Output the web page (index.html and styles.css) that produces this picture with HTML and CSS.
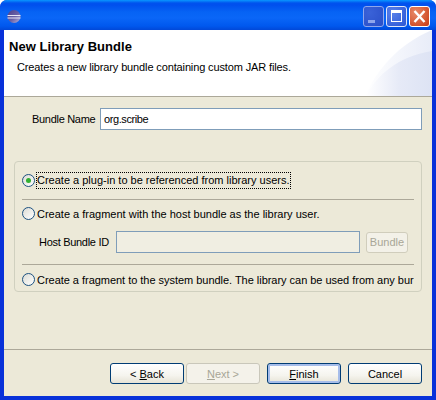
FILE: index.html
```html
<!DOCTYPE html>
<html lang="en">
<head>
<meta charset="utf-8">
<title>New Library Bundle</title>
<link rel="stylesheet" href="styles.css">
</head>
<body>
<div class="window">
  <div class="titlebar">
    <svg class="app-icon" width="14" height="14" viewBox="0 0 14 14">
      <defs><linearGradient id="eg" x1="0" y1="0" x2="1" y2="1"><stop offset="0" stop-color="#4a3f8c"/><stop offset=".55" stop-color="#6a62a8"/><stop offset="1" stop-color="#b8b4dc"/></linearGradient></defs>
      <circle cx="7" cy="6.5" r="6.5" fill="url(#eg)"/>
      <rect x="0.5" y="5" width="13" height="1" fill="#e8e8f6"/>
      <rect x="0.5" y="7.5" width="13" height="1" fill="#e8e8f6"/>
    </svg>
    <div class="controls">
      <span class="ctl ctl-min"><svg width="21" height="21" viewBox="0 0 21 21"><rect x="5" y="14" width="7" height="3" fill="#8ea6ec"/></svg></span>
      <span class="ctl ctl-max"><svg width="21" height="21" viewBox="0 0 21 21"><path d="M5 4h11v12H5z M6 7v8h9V7z" fill="#fff" fill-rule="evenodd"/></svg></span>
      <span class="ctl ctl-close"><svg width="21" height="21" viewBox="0 0 21 21"><path d="M5.5 5l10 11M15.5 5l-10 11" stroke="#fff" stroke-width="2.4"/></svg></span>
    </div>
  </div>
  <div class="client">
    <header class="banner">
      <h1 class="banner-title">New Library Bundle</h1>
      <p class="banner-desc">Creates a new library bundle containing custom JAR files.</p>
      <svg class="banner-art" width="70" height="66" viewBox="0 0 70 66">
        <defs><linearGradient id="ba" x1="0" y1="0" x2="1" y2="0"><stop offset="0" stop-color="#fff"/><stop offset="1" stop-color="#e8ecf8"/></linearGradient>
        <linearGradient id="bb" x1="0" y1="0" x2="1" y2="0"><stop offset="0" stop-color="#fff"/><stop offset=".5" stop-color="#e6eaf7"/><stop offset="1" stop-color="#dde3f4"/></linearGradient></defs>
        <path d="M3 66C15 40 35 15 70 0V66z" fill="url(#ba)"/>
        <path d="M4 66C15 45 35 27 70 21V66z" fill="url(#bb)"/>
      </svg>
    </header>
    <main class="body">
      <div class="name-row">
        <label class="name-label">Bundle Name</label>
        <input class="field" type="text" value="org.scribe">
      </div>
      <div class="group">
        <div class="opt opt-first"><span class="radio radio-on"></span><span class="focus">Create a plug-in to be referenced from library users.</span></div>
        <div class="sep"></div>
        <div class="opt opt-second"><span class="radio"></span><span class="opt-text">Create a fragment with the host bundle as the library user.</span></div>
        <div class="host-row">
          <span class="host-label">Host Bundle ID</span>
          <span class="host-field"></span>
          <span class="host-btn">Bundle</span>
        </div>
        <div class="sep"></div>
        <div class="opt opt-third"><span class="radio"></span><span class="opt-text clip">Create a fragment to the system bundle. The library can be used from any bur</span></div>
      </div>
    </main>
    <footer class="footer">
      <button class="btn back">&lt; <u>B</u>ack</button>
      <button class="btn next" disabled><u>N</u>ext &gt;</button>
      <button class="btn finish default"><u>F</u>inish</button>
      <button class="btn cancel">Cancel</button>
    </footer>
  </div>
</div>
</body>
</html>
```
FILE: styles.css
```css
* { box-sizing: border-box; }
html, body { margin: 0; padding: 0; }
body { width: 436px; height: 400px; overflow: hidden; font-family: "Liberation Sans", "Noto Sans", sans-serif; font-size: 11px; color: #000; }
.window { width: 436px; height: 400px; display: flex; flex-direction: column; background: #0831d9; border-radius: 7px 7px 0 0; overflow: hidden; }
.titlebar { height: 30px; flex: none; display: flex; align-items: flex-start; padding: 6px 6px 0 7px; background: linear-gradient(180deg, #0997ff 0, #0053ee 3px, #0050ee 5px, #0663f4 12px, #0a66f7 18px, #0058ee 26px, #0148d8 30px); }
.app-icon { margin-top: 4px; }
.controls { margin-left: auto; display: flex; gap: 2px; }
.ctl { width: 21px; height: 21px; border: 1px solid #fff; border-radius: 3px; display: block; overflow: hidden; }
.ctl svg { display: block; margin: -1px; }
.ctl-min { background: radial-gradient(circle at 30% 30%, #3a62d8, #2a4fc8); border-color: #8ea6ec; }
.ctl-max { background: radial-gradient(circle at 30% 30%, #5a82ea, #2a55d4); border-color: #dfe6f8; }
.ctl-close { background: radial-gradient(circle at 30% 30%, #e88a68, #c93a14); }
.client { flex: 1; margin: 0 4px 4px; background: #ece9d8; display: flex; flex-direction: column; min-height: 0; }
.banner { height: 67px; flex: none; background: #fff; border-bottom: 1px solid #aca899; padding: 9px 0 0 5px; position: relative; }
.banner-title { margin: 0; font-size: 13px; line-height: 15px; font-weight: 700; letter-spacing: 0.05px; }
.banner-desc { margin: 6px 0 0 8px; line-height: 15px; letter-spacing: -0.13px; }
.banner-art { position: absolute; right: 0; top: 0; }
.body { flex: 1; padding: 11px 10px 0; min-height: 0; }
.name-row { display: flex; align-items: center; height: 22px; }
.name-label { margin-left: 18px; width: 68px; flex: none; white-space: nowrap; letter-spacing: -0.3px; }
.field { width: 322px; height: 22px; border: 1px solid #7f9db9; padding: 0 3px; font: inherit; color: #000; background: #fff; letter-spacing: -0.4px; }
.group { margin-top: 31px; height: 131px; width: 408px; border: 1px solid #d0d0bf; border-radius: 4px; padding: 0 7px; overflow: hidden; }
.opt { display: flex; align-items: center; height: 15px; white-space: nowrap; }
.opt-first { margin-top: 11px; }
.opt-second { margin-top: 6px; }
.opt-third { margin-top: 7px; }
.radio { width: 13px; height: 13px; border-radius: 50%; border: 1px solid #1c5180; background: linear-gradient(135deg, #dcdcd4, #fff); flex: none; margin-right: 2px; position: relative; }
.radio-on::after { content: ""; position: absolute; left: 3px; top: 3px; width: 5px; height: 5px; border-radius: 50%; background: #31b031; }
.focus { outline: 1px dotted #000; line-height: 15px; }
.opt-text { overflow: hidden; }
.clip { width: 377px; letter-spacing: -0.03px; }
.sep { height: 1px; background: #aca899; margin-top: 11px; }
.host-row { display: flex; align-items: center; height: 22px; margin-top: 10px; }
.host-label { margin-left: 17px; width: 77px; flex: none; white-space: nowrap; letter-spacing: -0.3px; }
.host-field { width: 244px; height: 22px; border: 1px solid #7f9db9; background: #f0eee2; }
.host-btn { width: 42px; height: 21px; margin-left: 6px; border: 1px solid #d0cdbc; border-radius: 3px; background: #f3f1e8; color: #a8a697; display: flex; align-items: center; justify-content: center; }
.footer { height: 47px; flex: none; border-top: 1px solid #aca899; margin-top: auto; display: flex; padding: 13px 0 0 106px; gap: 2px; }
.btn { width: 74px; height: 21px; padding: 0; font: inherit; color: #000; border: 1px solid #003c74; border-radius: 3px; background: linear-gradient(180deg, #fff 0, #f5f4ee 60%, #e6e3d6 100%); }
.next { border-color: #c9c7ba; background: #f4f2ea; color: #a8a697; }
.finish { margin-left: 5px; box-shadow: inset 0 0 0 2px #a6bdea; }
.cancel { margin-left: 5px; }
```
